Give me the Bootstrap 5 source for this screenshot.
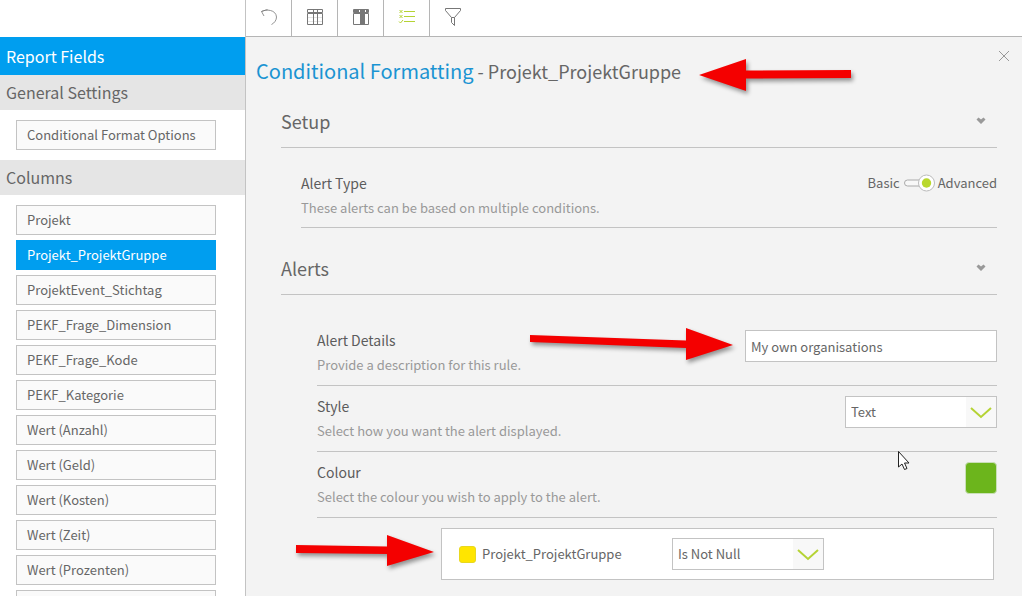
<!DOCTYPE html>
<html lang="en">
<head>
<meta charset="utf-8">
<meta name="viewport" content="width=device-width, initial-scale=1">
<title>Conditional Formatting</title>
<link href="https://cdn.jsdelivr.net/npm/bootstrap@5.3.0/dist/css/bootstrap.min.css" rel="stylesheet">
<style>
  :root { --accent: #009eef; --line: #c3c3c3; --ink: #666; }
  body { font-family: "Noto Sans CJK SC", "Open Sans", sans-serif; font-size: 13px; line-height: 20px; color: var(--ink); background: #fff; }
  .side { width: 246px; border-right: 1px solid var(--line); }
  .side-top, .tools { height: 37px; }
  .side-title, .side-group { font-size: 16px; font-weight: 400; margin: 0; padding-left: 6px; }
  .side-title { background: var(--accent); color: #fff; line-height: 38px; }
  .side-group { background: #e5e5e5; line-height: 34px; padding-bottom: 1px; }
  .fields { padding: 10px 29px 10px 16px; gap: 5px; }
  .field { height: 30px; padding: 0 10px; border: 1px solid #c3c3c3; background: #fafafa; color: var(--ink); text-align: left; font-size: 13px; line-height: 28px; }
  .field.active { background: var(--accent); border-color: var(--accent); color: #fff; }
  .tools { border-bottom: 1px solid #b5b5b5; }
  .tool { width: 46px; border: 0; border-right: 1px solid #b5b5b5; background: #fff; padding: 0 0 4px; color: #777; }
  .tool:last-child { border-right: 0; }
  .tool.active { color: #b5d334; }
  .panel { background: #f3f3f3; padding: 24px 25px 0 35px; }
  .panel-title { font-size: 18px; line-height: 20px; font-weight: 400; margin: 0 0 0 -25px; }
  .panel-title span { color: #1a94d2; font-size: 20px; }
  .close-x { top: 13px; right: 12px; color: #999; }
  .plain { border: 0; background: none; padding: 0; line-height: 0; }
  .sect { padding: 25px 11px 11px 0; border-bottom: 1px solid var(--line); }
  .sect h2 { font-size: 18px; line-height: 30px; font-weight: 400; margin: 0; }
  .setting { padding: 10px 0; border-bottom: 1px solid var(--line); }
  .setting .head { display: block; font-size: 14px; line-height: 20px; margin-bottom: 5px; color: #5c5c5c; }
  .setting .hint { color: #999; margin: 0; }
  .setup-body { padding: 15px 0 0 20px; }
  .setup-body .setting { padding-bottom: 9px; }
  .alerts-body { padding: 25px 0 0 36px; }
  .toggle { appearance: none; width: 31px; height: 18px; margin: 0 3px 0 4px; background: url("data:image/svg+xml,%3Csvg xmlns='http://www.w3.org/2000/svg' viewBox='0 0 31 18'%3E%3Crect x='.5' y='6' width='22' height='6' rx='3' fill='%23f8f8f8' stroke='%23aaa'/%3E%3Ccircle cx='22.500' cy='9' r='8' fill='%23fff' stroke='%23bbb'/%3E%3Ccircle cx='22.500' cy='9' r='4.700' fill='%23b9d82e'/%3E%3C/svg%3E"); }
  .entry, .pick { height: 32px; border: 1px solid var(--line); border-radius: 0; font-size: 13px; line-height: 20px; color: var(--ink); padding: 5px; }
  .entry { width: 252px; }
  .pick { width: 152px; padding-right: 32px; background: #fff url("data:image/svg+xml,%3Csvg xmlns='http://www.w3.org/2000/svg' width='30' height='30'%3E%3Crect width='30' height='30' fill='%23f8f8f8'/%3E%3Cpath d='M5 11l10 9 10-9' fill='none' stroke='%23b5d334' stroke-width='2'/%3E%3C/svg%3E") no-repeat right center / 30px 30px; }
  .swatch { width: 32px; height: 32px; border: 1px solid #c9dfb8; border-radius: 4px; background: #6cb51c; }
  .swatch-mini { width: 17px; height: 17px; border: 1px solid #e8d820; border-radius: 3px; background: #ffe500; }
  .rule { margin: 10px 3px 0 124px; height: 52px; padding-left: 17px; background: #fff; border: 1px solid var(--line); }
  .rule-name { width: 190px; margin-left: 6px; }
  .note { pointer-events: none; filter: drop-shadow(2px 3px 2px #0006); overflow: visible; }
  .note-title { left: 100%; top: -3px; margin-left: 18px; }
  .note-entry { right: 264px; top: 7px; }
  .note-rule { right: 100%; top: 5px; margin-right: 8px; }
  .pointer { right: 87px; bottom: -20px; }
</style>
</head>
<body>
<div class="d-flex vh-100 overflow-hidden">
  <aside class="side flex-shrink-0">
    <div class="side-top"></div>
    <h2 class="side-title">Report Fields</h2>
    <h3 class="side-group">General Settings</h3>
    <div class="fields d-grid"><button class="field" type="button">Conditional Format Options</button></div>
    <h3 class="side-group">Columns</h3>
    <div class="fields d-grid">
      <button class="field" type="button">Projekt</button>
      <button class="field active" type="button">Projekt_ProjektGruppe</button>
      <button class="field" type="button">ProjektEvent_Stichtag</button>
      <button class="field" type="button">PEKF_Frage_Dimension</button>
      <button class="field" type="button">PEKF_Frage_Kode</button>
      <button class="field" type="button">PEKF_Kategorie</button>
      <button class="field" type="button">Wert (Anzahl)</button>
      <button class="field" type="button">Wert (Geld)</button>
      <button class="field" type="button">Wert (Kosten)</button>
      <button class="field" type="button">Wert (Zeit)</button>
      <button class="field" type="button">Wert (Prozenten)</button>
      <button class="field" type="button">&nbsp;</button>
    </div>
  </aside>

  <div class="flex-grow-1 d-flex flex-column">
    <nav class="tools d-flex flex-shrink-0" aria-label="Report tools">
      <button class="tool" type="button" aria-label="Undo"><svg width="18" height="18" fill="none" stroke="currentColor" stroke-width=".8"><path d="M7.500 1.500L1.500 3.500 4 8M1.500 3.500C6 1 16 1.500 16.500 9c0 3-2 6-5 7.500"/></svg></button>
      <button class="tool" type="button" aria-label="Table"><svg width="18" height="18" fill="none" stroke="currentColor"><path d="M1.500 1.500h15v3h-15zM1.500 5.500h15v11h-15zM7.500 1.500v3M11.500 1.500v3M7.500 5.500v11M11.500 5.500v11"/><path d="M2 9.500h14M2 13.500h14" stroke-opacity=".2"/></svg></button>
      <button class="tool" type="button" aria-label="Column"><svg width="18" height="18" fill="none" stroke="currentColor"><path d="M1.500 1.500h15v3h-15zM1.500 5.500h15v11h-15z"/><path d="M8 5h5v12H8z" fill="currentColor" stroke="none"/><path d="M2 3h5M8 3h5M14 3h3" stroke-width="2"/></svg></button>
      <button class="tool active" type="button" aria-label="Conditional formatting"><svg width="18" height="18" fill="none" stroke="currentColor"><path d="M1.500 2l3 3M4.500 2l-3 3M1.500 7l3 3M4.500 7l-3 3M1 13.500l1.500 1.500L5 12"/><path d="M6 3.500h11M6 8.500h11M6 13.500h11"/></svg></button>
      <button class="tool" type="button" aria-label="Filter"><svg width="18" height="20" fill="none" stroke="currentColor"><path d="M1.500 1.500h15v2l-6 7v8l-3-3v-5l-6-7zM7.500 10.500h3"/></svg></button>
    </nav>

    <main class="panel flex-grow-1 position-relative">
      <button class="plain close-x position-absolute" type="button" aria-label="Close"><svg width="12" height="12" stroke="currentColor"><path d="M1 1l10 10M11 1L1 11"/></svg></button>
      <div class="d-flex">
        <h1 class="panel-title position-relative text-nowrap"><span>Conditional Formatting</span> - Projekt_ProjektGruppe
          <svg class="note note-title position-absolute" width="152" height="34" fill="#f40000"><path d="M0 17L47 1v11.500L152 12v8l-105 .5V33z"/></svg>
        </h1>
      </div>

      <section>
        <div class="sect d-flex justify-content-between align-items-center">
          <h2>Setup</h2>
          <button class="plain" type="button" aria-label="Collapse Setup"><svg width="10" height="8" fill="#999"><path d="M.5 2.500L2.500.5 5 2.500 7.500.5l2 2L5 7z"/></svg></button>
        </div>
        <div class="setup-body">
          <div class="setting d-flex justify-content-between align-items-start">
            <div><label class="head" for="alertType">Alert Type</label><p class="hint">These alerts can be based on multiple conditions.</p></div>
            <div class="d-flex align-items-center"><span>Basic</span><input class="toggle" type="checkbox" role="switch" id="alertType" checked><span>Advanced</span></div>
          </div>
        </div>
      </section>

      <section>
        <div class="sect d-flex justify-content-between align-items-center">
          <h2>Alerts</h2>
          <button class="plain" type="button" aria-label="Collapse Alerts"><svg width="10" height="8" fill="#999"><path d="M.5 2.500L2.500.5 5 2.500 7.500.5l2 2L5 7z"/></svg></button>
        </div>
        <div class="alerts-body">
          <div class="setting d-flex justify-content-between align-items-start position-relative">
            <div><label class="head" for="details">Alert Details</label><p class="hint">Provide a description for this rule.</p></div>
            <svg class="note note-entry position-absolute" width="203" height="34" fill="#f40000"><path d="M0 8l156 5.500V1l47 17-47 15V21L0 15z"/></svg>
            <input class="entry" type="text" id="details" value="My own organisations">
          </div>
          <div class="setting d-flex justify-content-between align-items-start position-relative">
            <div><label class="head" for="style">Style</label><p class="hint">Select how you want the alert displayed.</p></div>
            <select class="pick form-select" id="style"><option>Text</option></select>
            <svg class="pointer position-absolute" width="12" height="20" fill="#fff" stroke="#222"><path d="M.5.5v15.500l3.500-3 2.500 5.500 2.500-1-2.500-5.500h4.500z"/></svg>
          </div>
          <div class="setting d-flex justify-content-between align-items-start">
            <div><span class="head">Colour</span><p class="hint">Select the colour you wish to apply to the alert.</p></div>
            <button class="swatch" type="button" aria-label="Colour"></button>
          </div>
          <div class="rule d-flex align-items-center position-relative">
            <svg class="note note-rule position-absolute" width="138" height="34" fill="#f40000"><path d="M0 11l91 1.500V1l47 17-47 14V20L0 19z"/></svg>
            <span class="swatch-mini"></span>
            <label class="rule-name" for="cond">Projekt_ProjektGruppe</label>
            <select class="pick form-select" id="cond"><option>Is Not Null</option></select>
          </div>
        </div>
      </section>
    </main>
  </div>
</div>
<script src="https://cdn.jsdelivr.net/npm/bootstrap@5.3.0/dist/js/bootstrap.bundle.min.js"></script>
</body>
</html>
